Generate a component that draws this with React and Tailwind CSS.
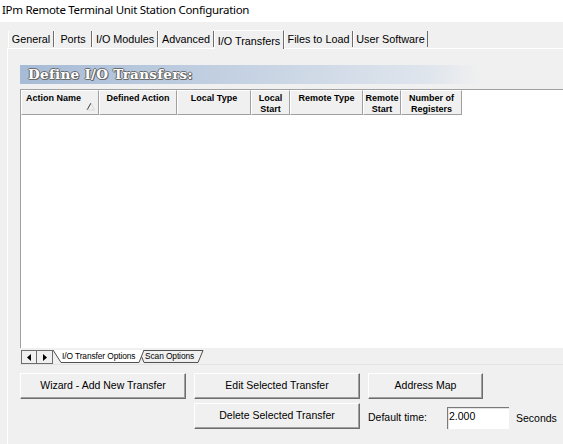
import React from 'react';

const tabs = [
  { label: 'General', w: 'w-[46px]' },
  { label: 'Ports', w: 'w-[38px]' },
  { label: 'I/O Modules', w: 'w-[66px]' },
  { label: 'Advanced', w: 'w-[56px]' },
  { label: 'I/O Transfers', w: 'w-[70px]', active: true },
  { label: 'Files to Load', w: 'w-[69px]' },
  { label: 'User Software', w: 'w-[75px]' },
];

const columns = [
  { label: 'Action Name', w: 'w-[78px]', left: true },
  { label: 'Defined Action', w: 'w-[78px]' },
  { label: 'Local Type', w: 'w-[74px]' },
  { label: 'Local\nStart', w: 'w-[39px]' },
  { label: 'Remote Type', w: 'w-[73px]' },
  { label: 'Remote\nStart', w: 'w-[38px]' },
  { label: 'Number of\nRegisters', w: 'w-[61px]' },
];

// classic raised win32 button
function Btn({ children, className = '' }) {
  return (
    <button
      className={`h-[26px] bg-[#f0f0f0] border border-t-white border-l-white border-b-[#6d6d6d] border-r-[#6d6d6d] shadow-[inset_-1px_-1px_0_#a0a0a0] text-[10.5px] text-black ${className}`}
    >
      {children}
    </button>
  );
}

export default function App() {
  return (
    <div className="w-[563px] h-[444px] overflow-hidden bg-[#f0f0f0] font-['Liberation_Sans',Arial,sans-serif] text-black flex flex-col">
      {/* Window title */}
      <div className="h-[22px] bg-white flex items-center px-[2px] pb-[2px] text-[11.5px] font-['Noto_Sans',sans-serif] tracking-[-0.3px] shrink-0">
        IPm Remote Terminal Unit Station Configuration
      </div>

      {/* Tab strip */}
      <div className="h-[26px] flex items-end pl-[8px] shrink-0">
        {tabs.map((t) =>
          t.active ? (
            <div
              key={t.label}
              className={`${t.w} h-[19px] -mb-px relative z-10 bg-[#f0f0f0] border-t border-l border-t-white border-l-white border-r border-r-[#6d6d6d] flex items-start justify-center pt-[2px] text-[10.8px]`}
            >
              {t.label}
            </div>
          ) : (
            <div
              key={t.label}
              className={`${t.w} h-[16px] mb-[1px] border-r border-r-[#6d6d6d] border-l border-l-white flex items-center justify-center text-[10.8px]`}
            >
              {t.label}
            </div>
          )
        )}
      </div>

      {/* Tab panel */}
      <div className="flex-1 ml-[7px] border-t border-l border-white flex flex-col pl-[12px] min-h-0">
        {/* Section header */}
        <div className="mt-[16px] h-[19px] bg-[linear-gradient(to_right,#a6bbd6,#dfe5ed_75%,#f0f0f0_85%)] flex items-center pl-[8px]">
          <span className="font-['DejaVu_Serif',serif] font-bold text-[13.5px] text-white tracking-[0.3px] [text-shadow:1px_0_0_#6a6a6a,-1px_0_0_#6a6a6a,0_1px_0_#6a6a6a,0_-1px_0_#6a6a6a,1px_1px_0_#6a6a6a]">
            Define I/O Transfers:
          </span>
        </div>

        {/* Grid */}
        <div className="mt-[5px] h-[259px] bg-white border-t border-l border-[#a0a0a0] flex flex-col">
          <div className="flex h-[25px]">
            {columns.map((c) => (
              <div
                key={c.label}
                className={`${c.w} bg-[#f0f0f0] border-t border-l border-t-white border-l-white border-b border-r border-b-[#a0a0a0] border-r-[#a0a0a0] text-[9px] font-bold leading-[11px] whitespace-pre-line flex ${c.left ? 'justify-start pl-[4px]' : 'justify-center text-center'} pt-[2px] relative`}
              >
                {c.label}
                {c.left && (
                  <svg className="absolute left-[64px] top-[11px]" width="9" height="9" viewBox="0 0 9 9">
                    <path d="M1 8 L5 1" stroke="#3a3a3a" strokeWidth="1" fill="none" />
                    <path d="M5 1 L8.5 8 L1 8" stroke="#d8d8d8" strokeWidth="1" fill="none" />
                  </svg>
                )}
              </div>
            ))}
          </div>
          <div className="flex-1" />
        </div>

        {/* Sheet tabs */}
        <div className="h-[17px] flex items-start pt-[2px] border-b border-b-[#e3e3e3]">
          <div className="flex ml-[1px] h-[14px]">
            <div className="w-[16px] h-[14px] border border-[#6d6d6d] bg-[#f0f0f0] flex items-center justify-center">
              <svg width="5" height="7" viewBox="0 0 5 7"><path d="M4 0 L0 3.5 L4 7 Z" fill="#000" /></svg>
            </div>
            <div className="w-[16px] h-[14px] border border-l-0 border-[#6d6d6d] bg-[#f0f0f0] flex items-center justify-center">
              <svg width="5" height="7" viewBox="0 0 5 7"><path d="M1 0 L5 3.5 L1 7 Z" fill="#000" /></svg>
            </div>
          </div>
          <div className="relative h-[13px] flex items-start">
            <svg className="absolute left-0 top-0" width="156" height="14" viewBox="0 0 156 14">
              <path d="M86 0.5 L150 0.5 L145 12.5 L91 12.5 Z" fill="#f0f0f0" stroke="#505050" strokeWidth="1" />
              <path d="M0 0 L8 12.5 L86 12.5 L91 0" fill="#ffffff" stroke="#505050" strokeWidth="1" />
            </svg>
            <span className="relative pl-[9px] w-[92px] text-[8.4px] leading-[12px] tracking-[-0.1px]">I/O Transfer Options</span>
            <span className="relative text-[8.4px] leading-[12px] tracking-[-0.1px]">Scan Options</span>
          </div>
        </div>

        {/* Buttons */}
        <div className="mt-[8px] flex gap-[8px]">
          <Btn className="w-[166px]">Wizard - Add New Transfer</Btn>
          <Btn className="w-[166px]">Edit Selected Transfer</Btn>
          <Btn className="w-[115px]">Address Map</Btn>
        </div>
        <div className="mt-[4px] flex items-center">
          <Btn className="ml-[174px] w-[166px]">Delete Selected Transfer</Btn>
          <span className="ml-[8px] w-[79px] text-[10.5px] pt-[3px]">Default time:</span>
          <div className="mt-[4px] w-[62px] h-[22px] bg-white border-t border-l border-[#7a7a7a] border-b-white border-r-white shadow-[inset_1px_1px_0_#e3e3e3] text-[10.5px] leading-[14px] px-[1px] pt-[1px]">
            2.000
          </div>
          <span className="ml-[7px] text-[10.5px] pt-[5px]">Seconds</span>
        </div>
      </div>
    </div>
  );
}
